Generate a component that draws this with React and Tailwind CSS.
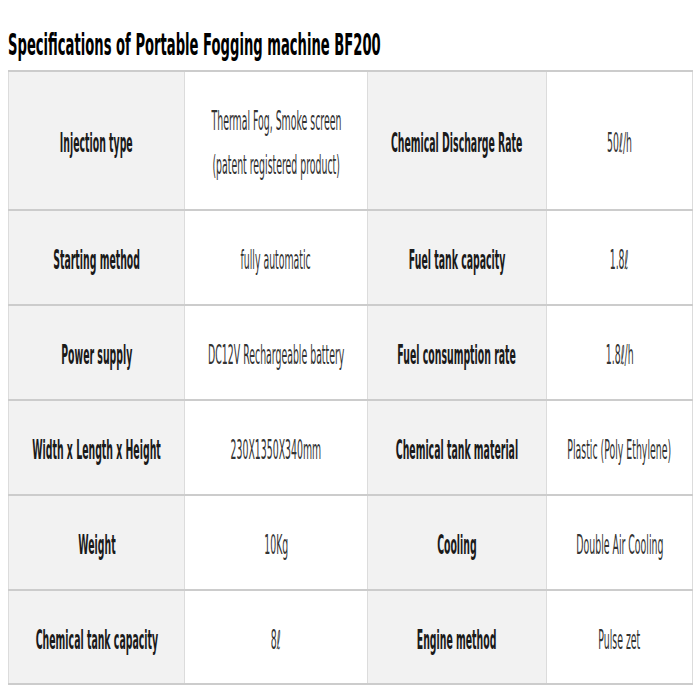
import React from "react";

const rows = [
  ["Injection type", ["Thermal Fog, Smoke screen", "(patent registered product)"], "Chemical Discharge Rate", ["50ℓ/h"], "h-[139px]"],
  ["Starting method", ["fully automatic"], "Fuel tank capacity", ["1.8ℓ"], "h-[95px]"],
  ["Power supply", ["DC12V Rechargeable battery"], "Fuel consumption rate", ["1.8ℓ/h"], "h-[95px]"],
  ["Width x Length x Height", ["230X1350X340mm"], "Chemical tank material", ["Plastic (Poly Ethylene)"], "h-[95px]"],
  ["Weight", ["10Kg"], "Cooling", ["Double Air Cooling"], "h-[95px]"],
  ["Chemical tank capacity", ["8ℓ"], "Engine method", ["Pulse zet"], "h-[94px]"],
];

function Squeeze({ children, className }) {
  return (
    <div className="flex justify-center">
      <span className={"shrink-0 inline-block whitespace-nowrap scale-x-[0.36] " + className}>
        {children}
      </span>
    </div>
  );
}

function Head({ text }) {
  return (
    <td className="bg-[#f2f2f2] border-x border-x-[#dcdcdc] border-y-2 border-y-[#cccccc] text-center align-middle p-0">
      <div className="pt-[5px] leading-[36px]">
        <Squeeze className="text-[26px] font-bold text-[#1a1a1a]">{text}</Squeeze>
      </div>
    </td>
  );
}

function Value({ lines }) {
  return (
    <td className="bg-white border-x border-x-[#dcdcdc] border-y-2 border-y-[#cccccc] text-center align-middle p-0">
      <div className="pt-[5px] flex flex-col leading-[44px]">
        {lines.map((l) => (
          <Squeeze key={l} className="text-[26px] text-[#333333]">{l}</Squeeze>
        ))}
      </div>
    </td>
  );
}

export default function App() {
  return (
    <div className="w-[700px] h-[700px] bg-white overflow-hidden" style={{ fontFamily: '"DejaVu Sans", Verdana, sans-serif' }}>
      <div className="h-[70px] pl-2 pt-[27px]">
        <span className="inline-block origin-left scale-x-[0.424] whitespace-nowrap text-[31px] font-bold text-black leading-[34px]">
          Specifications of Portable Fogging machine BF200
        </span>
      </div>
      <table className="ml-2 border-collapse table-fixed w-[684px]">
        <colgroup>
          <col className="w-[176px]" />
          <col className="w-[183px]" />
          <col className="w-[179px]" />
          <col className="w-[146px]" />
        </colgroup>
        <tbody>
          {rows.map(([a, b, c, d, h]) => (
            <tr key={a} className={h}>
              <Head text={a} />
              <Value lines={b} />
              <Head text={c} />
              <Value lines={d} />
            </tr>
          ))}
        </tbody>
      </table>
    </div>
  );
}
